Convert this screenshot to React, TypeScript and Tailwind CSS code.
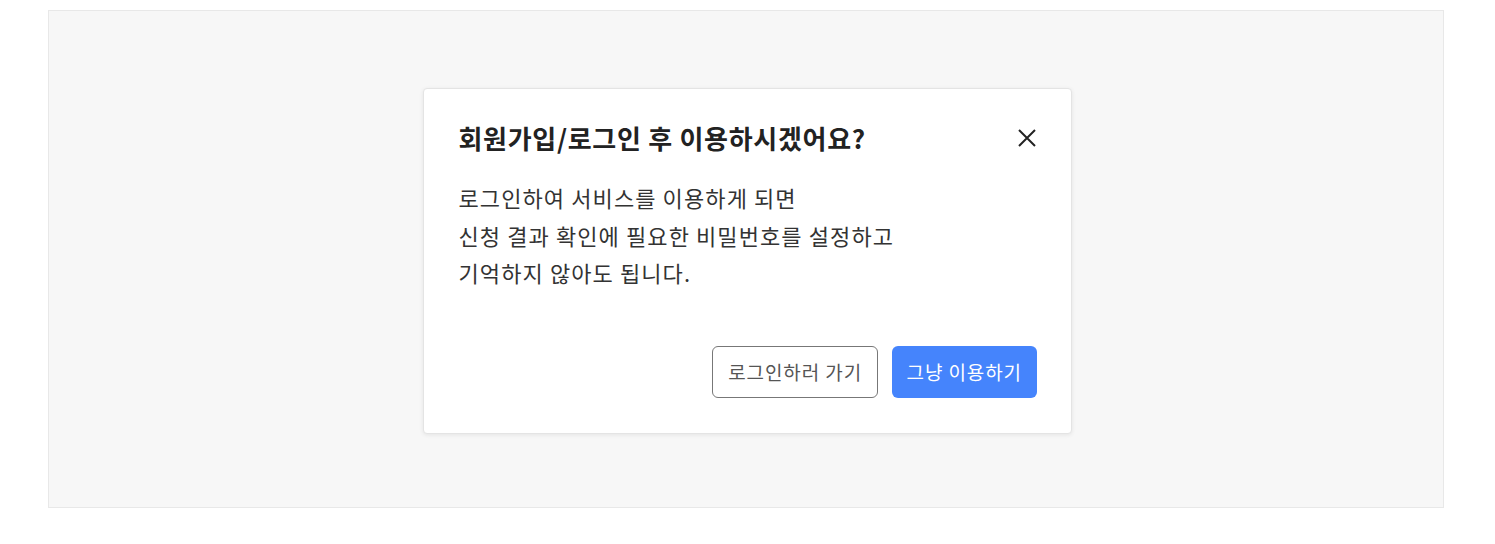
export default function App() {
  return (
    <div className="min-h-screen bg-white pt-[10px] pl-[48px] pr-[51px] font-['Noto_Sans_CJK_KR',sans-serif]">
      {/* BACKDROP */}
      <div className="h-[498px] border border-[#e8e8e8] bg-[#f7f7f7] flex items-center justify-center">
        {/* MODAL */}
        <div className="w-[649px] mt-[4px] ml-[2px] bg-white rounded-[4px] border border-[#e4e4e4] shadow-[0_1px_4px_rgba(0,0,0,0.08)] pt-[32px] pb-[35px] pl-[35px] pr-[34px]">
          <div className="flex items-center justify-between">
            <h2 className="text-[26px] leading-[34px] font-bold text-[#222] tracking-[0.7px]">
              회원가입/로그인 후 이용하시겠어요?
            </h2>
            <button className="w-[20px] h-[20px] flex items-center justify-center text-[#222]" aria-label="닫기">
              <svg width="18" height="18" viewBox="0 0 18 18" fill="none" stroke="currentColor" strokeWidth="2">
                <path d="M1 1L17 17M17 1L1 17" />
              </svg>
            </button>
          </div>

          <p className="mt-[24px] text-[22px] leading-[37.5px] text-[#333] tracking-[1.1px]">
            로그인하여 서비스를 이용하게 되면
            <br />
            신청 결과 확인에 필요한 비밀번호를 설정하고
            <br />
            기억하지 않아도 됩니다.
          </p>

          {/* ACTIONS */}
          <div className="mt-[54px] flex justify-end gap-[14px]">
            <button className="h-[52px] px-[15px] rounded-[6px] border border-[#777] bg-white text-[19px] text-[#555] tracking-[0.9px]">
              로그인하러 가기
            </button>
            <button className="h-[52px] px-[14.5px] rounded-[6px] bg-[#4584fc] text-[19px] text-white tracking-[0.9px]">
              그냥 이용하기
            </button>
          </div>
        </div>
      </div>
    </div>
  );
}
